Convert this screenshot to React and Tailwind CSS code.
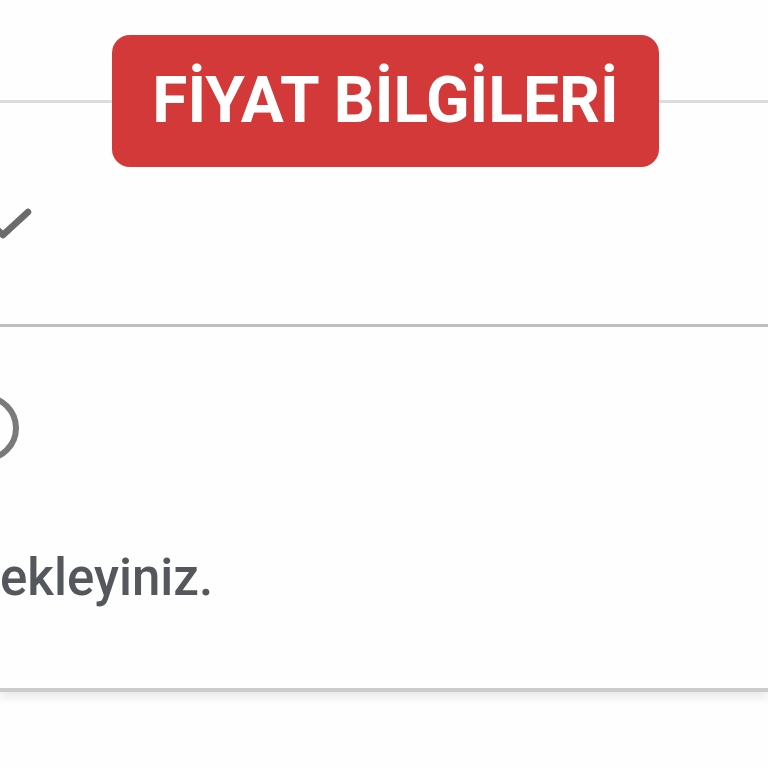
export default function App() {
  return (
    <div className="min-h-screen w-[768px] overflow-hidden bg-[#fefefe] font-['Roboto',sans-serif]">
      {/* title strip */}
      <div className="flex items-center pt-[35px]">
        <div className="h-[3px] w-[112px] bg-[#dcdcdc]" />
        <div className="flex h-[132px] w-[547px] items-center justify-center rounded-[18px] bg-[#d33939]">
          <span className="text-[64px] font-bold text-white">FİYAT BİLGİLERİ</span>
        </div>
        <div className="h-[3px] flex-1 bg-[#dcdcdc]" />
      </div>

      {/* first row */}
      <div className="h-[160px] border-b-[3px] border-[#bfbfbf] pt-[36px]">
        <svg className="-ml-[12px] block" width="44" height="44" viewBox="0 0 44 44">
          <path d="M3 21 L15 32 L40 9" fill="none" stroke="#6b6b6b" strokeWidth="6.5" strokeLinecap="round" strokeLinejoin="round" />
        </svg>
      </div>

      {/* second row */}
      <div className="h-[365px] border-b-[4px] border-[#cccccc] pt-[66px] shadow-[0_6px_8px_rgba(0,0,0,0.08)]">
        <svg className="-ml-[50px] block" width="70" height="70" viewBox="0 0 70 70">
          <circle cx="35" cy="35" r="31" fill="none" stroke="#7a7a7a" strokeWidth="6" />
        </svg>
        <p className="mt-[89px] text-[51px] font-medium leading-none text-[#54585c]">ekleyiniz.</p>
      </div>
    </div>
  )
}
